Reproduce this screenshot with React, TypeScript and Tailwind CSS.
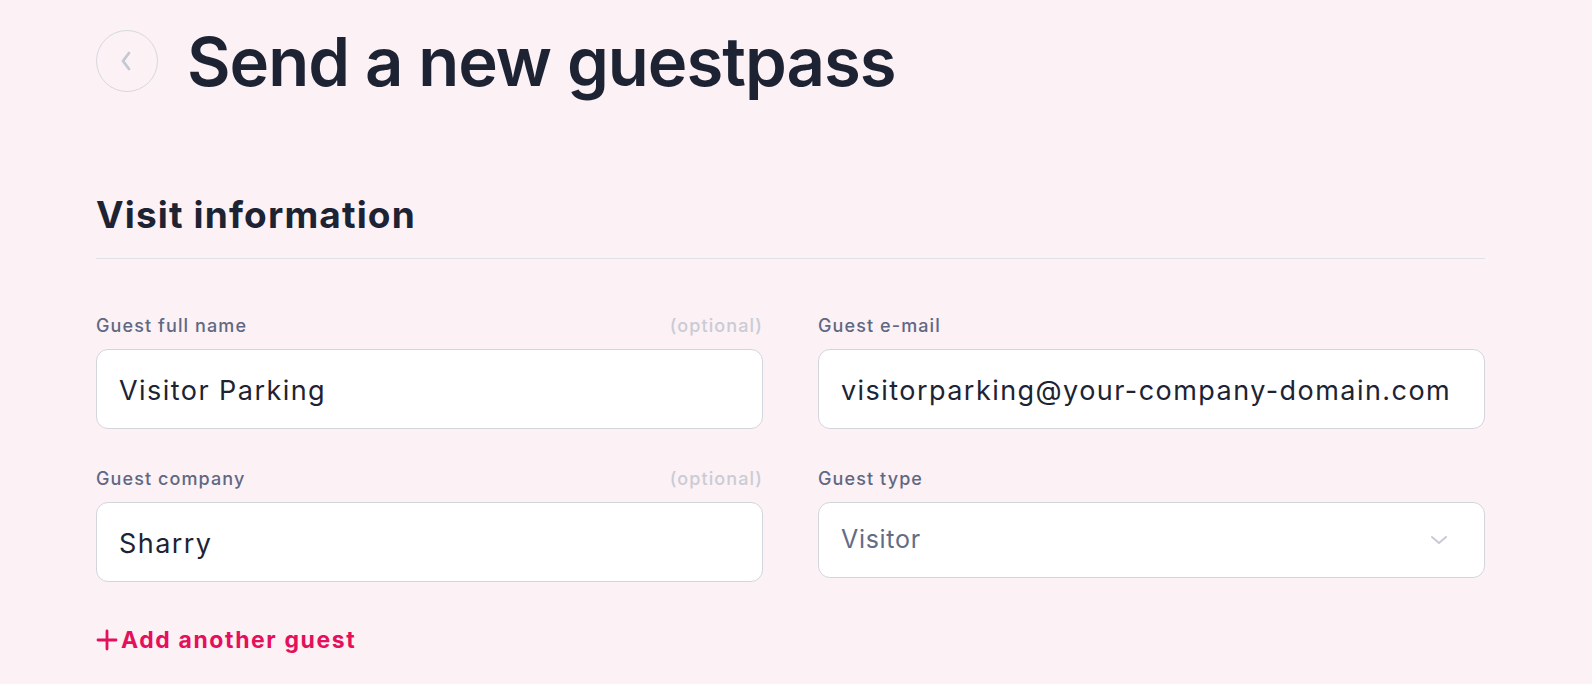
import React from "react";

const font = { fontFamily: "Inter, 'Noto Sans', sans-serif" };

function Label({ text, optional }: { text: string; optional?: boolean }) {
  return (
    <div className="flex items-center justify-between h-[24px] mb-[12px]">
      <span className="text-[18px] font-medium text-[#5f6883] tracking-[1.1px]">{text}</span>
      {optional && <span className="text-[18px] font-medium text-[#c9ccd5] tracking-[1.1px]">(optional)</span>}
    </div>
  );
}

function Field({ label, value, optional }: { label: string; value: string; optional?: boolean }) {
  return (
    <div>
      <Label text={label} optional={optional} />
      <div className="h-[80px] rounded-[12px] border border-[#d3d5dc] bg-white flex items-center px-[22px] pt-[4px]">
        <span className="text-[27px] text-[#1d2333] tracking-[1.45px]">{value}</span>
      </div>
    </div>
  );
}

export default function App() {
  return (
    <div style={font} className="min-h-[684px] w-full bg-[#fcf1f4] pl-[96px] pr-[107px] pt-[30px]">
      <div className="flex items-center h-[62px]">
        <div className="w-[62px] h-[62px] rounded-full border border-[#d6d9e0] flex items-center justify-center">
          <svg width="14" height="22" viewBox="0 0 14 22" fill="none" className="-ml-[2px]">
            <path d="M10 3L4 11L10 19" stroke="#c3c8d2" strokeWidth="2.8" strokeLinecap="round" strokeLinejoin="round" />
          </svg>
        </div>
        <h1 className="ml-[29px] text-[67px] font-semibold text-[#1d2333] leading-none tracking-[-1px]">
          Send a new guestpass
        </h1>
      </div>

      <div className="mt-[103px] pb-[23px] border-b border-[#dfe1e6]">
        <h2 className="text-[37px] leading-[40px] font-bold text-[#1d2333] tracking-[1.15px]">Visit information</h2>
      </div>

      <div className="grid grid-cols-2 gap-x-[55px] gap-y-[37px] mt-[54px]">
        <Field label="Guest full name" value="Visitor Parking" optional />
        <Field label="Guest e-mail" value="visitorparking@your-company-domain.com" />
        <Field label="Guest company" value="Sharry" optional />
        <div>
          <Label text="Guest type" />
          <div className="h-[76px] rounded-[12px] border border-[#d3d5dc] bg-white flex items-center justify-between px-[22px]">
            <span className="text-[25px] text-[#636c86] tracking-[0.7px]">Visitor</span>
            <svg width="18" height="12" viewBox="0 0 18 12" fill="none" className="mr-[14px]">
              <path d="M2 3L9 9L16 3" stroke="#c7cbd3" strokeWidth="2" strokeLinecap="round" strokeLinejoin="round" />
            </svg>
          </div>
        </div>
      </div>

      <div className="mt-[44px] h-[28px] flex items-center text-[#e5105c] text-[23px] font-bold">
        <svg width="22" height="22" viewBox="0 0 22 22" fill="none" className="mr-[3px]">
          <path d="M11 2V20M2 11H20" stroke="#e5105c" strokeWidth="2.8" strokeLinecap="round" />
        </svg>
        <span className="tracking-[1.6px]">Add another guest</span>
      </div>
    </div>
  );
}
